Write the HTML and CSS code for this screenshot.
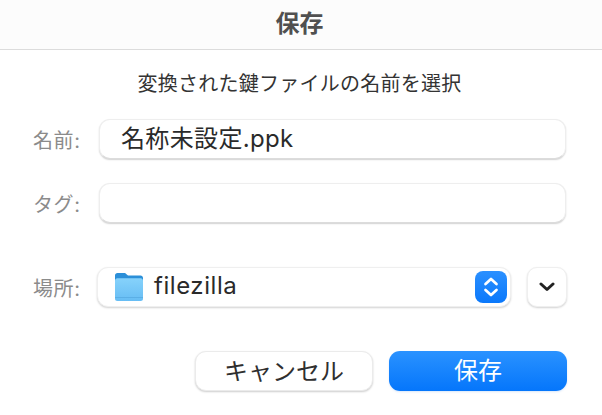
FILE: index.html
```html
<!DOCTYPE html>
<html lang="ja">
<head>
<meta charset="utf-8">
<title>保存</title>
<link rel="stylesheet" href="styles.css">
</head>
<body>
<div class="dialog">
  <header class="titlebar">保存</header>
  <p class="message">変換された鍵ファイルの名前を選択</p>
  <div class="row row-name">
    <span class="label">名前:</span>
    <div class="field name-field">名称未設定.ppk</div>
  </div>
  <div class="row row-tag">
    <span class="label">タグ:</span>
    <div class="field"></div>
  </div>
  <div class="row row-place">
    <span class="label">場所:</span>
    <div class="select">
      <svg class="folder" width="28" height="28" viewBox="0 0 28 28">
        <defs>
          <linearGradient id="fb" x1="0" y1="0" x2="0" y2="1">
            <stop offset="0" stop-color="#86d2fb"/>
            <stop offset="1" stop-color="#67bdf4"/>
          </linearGradient>
        </defs>
        <path d="M0 2.500C0 1 1 0 2.500 0H9c1.200 0 1.800.4 2.500 1.200L13 2.500h12.500C27 2.500 28 3.500 28 5v8H0z" fill="#2b8fd8"/>
        <path d="M0 7.500C0 6.200 1 5.200 2.300 5.200h23.400C27 5.200 28 6.200 28 7.500v18.200c0 1.300-1 2.300-2.300 2.300H2.300C1 28 0 27 0 25.700z" fill="url(#fb)"/>
        <path d="M0 24.500h28" stroke="#55a8e0" stroke-width="0.700" fill="none"/>
      </svg>
      <span class="select-text">filezilla</span>
      <span class="stepper">
        <svg width="16" height="26" viewBox="0 0 16 26" fill="none" stroke="#fff" stroke-width="2.700" stroke-linecap="round" stroke-linejoin="round">
          <path d="M2.500 10L8 5l5.500 5"/>
          <path d="M2.500 16L8 21l5.500-5"/>
        </svg>
      </span>
    </div>
    <div class="expand">
      <svg width="16" height="10" viewBox="0 0 16 10" fill="none" stroke="#222" stroke-width="3" stroke-linecap="round" stroke-linejoin="round">
        <path d="M2 2l6 5.500L14 2"/>
      </svg>
    </div>
  </div>
  <div class="actions">
    <button class="btn btn-cancel">キャンセル</button>
    <button class="btn btn-save">保存</button>
  </div>
</div>
</body>
</html>
```
FILE: styles.css
```css
* { box-sizing: border-box; }
html, body { margin: 0; padding: 0; background: #fff; }
body {
  width: 602px;
  height: 415px;
  overflow: hidden;
  font-family: "Inter", "Noto Sans CJK JP", sans-serif;
  color: #2a2a2a;
}
.dialog { display: flex; flex-direction: column; height: 100%; }
.titlebar {
  height: 50px;
  background: #fcfcfc;
  border-bottom: 1px solid #dcdcdc;
  display: flex;
  align-items: center;
  justify-content: center;
  font-size: 24px;
  font-weight: 700;
  color: #505050;
  padding: 0 3px 7px 0;
}
.message {
  margin: 20px 0 0;
  height: 29px;
  line-height: 29px;
  font-size: 20px;
  letter-spacing: .25px;
  text-align: center;
  color: #333;
  padding-right: 3px;
}
.row { display: flex; align-items: center; }
.row-name { margin-top: 20px; padding-left: 33px; }
.row-tag { margin-top: 24px; padding-left: 33px; }
.row-place { margin-top: 44px; padding-left: 33px; }
.label {
  width: 64px;
  padding-top: 3px;
  font-size: 20px;
  letter-spacing: .6px;
  line-height: 28px;
  color: #8b8b8b;
  flex: none;
}
.row-name .label, .row-tag .label { width: 66px; }
.field {
  width: 467px;
  height: 40px;
  background: #fff;
  border: 1px solid #eeeeee;
  border-bottom-color: #dcdcdc;
  border-radius: 11px;
  box-shadow: 0 1px 1.500px rgba(0,0,0,.18);
  font-size: 24px;
  letter-spacing: .35px;
  line-height: 38px;
  padding-left: 21px;
  color: #2a2a2a;
}
.select {
  width: 414px;
  height: 40px;
  background: #fff;
  border: 1px solid #efefef;
  border-radius: 11px;
  box-shadow: 0 1px 2px rgba(0,0,0,.18);
  display: flex;
  align-items: center;
  padding: 0 3px 0 17px;
}
.folder { flex: none; margin-right: 11px; }
.select-text { font-size: 24px; letter-spacing: .55px; color: #2a2a2a; flex: 1; padding-bottom: 3px; }
.stepper {
  width: 32px;
  height: 32px;
  border-radius: 8px;
  background: linear-gradient(#2b90ff, #0a78fb);
  display: flex;
  align-items: center;
  justify-content: center;
  flex: none;
}
.expand {
  width: 40px;
  height: 40px;
  margin-left: 16px;
  background: #fff;
  border: 1px solid #efefef;
  border-radius: 10px;
  box-shadow: 0 1px 2px rgba(0,0,0,.18);
  display: flex;
  align-items: center;
  justify-content: center;
}
.actions {
  display: flex;
  gap: 16px;
  justify-content: flex-end;
  margin-top: 44px;
  padding-right: 35px;
}
.btn {
  width: 178px;
  height: 40px;
  border: 0;
  border-radius: 11px;
  font-family: inherit;
  font-size: 24px;
  padding: 0 0 6px;
}
.btn-cancel {
  background: #fff;
  color: #2f2f2f;
  border: 1px solid #ebebeb;
  box-shadow: 0 1px 2px rgba(0,0,0,.2);
}
.btn-save {
  background: linear-gradient(#2a92ff, #0576fb);
  color: #fff;
  box-shadow: 0 1px 2px rgba(0,100,220,.15);
}
```
